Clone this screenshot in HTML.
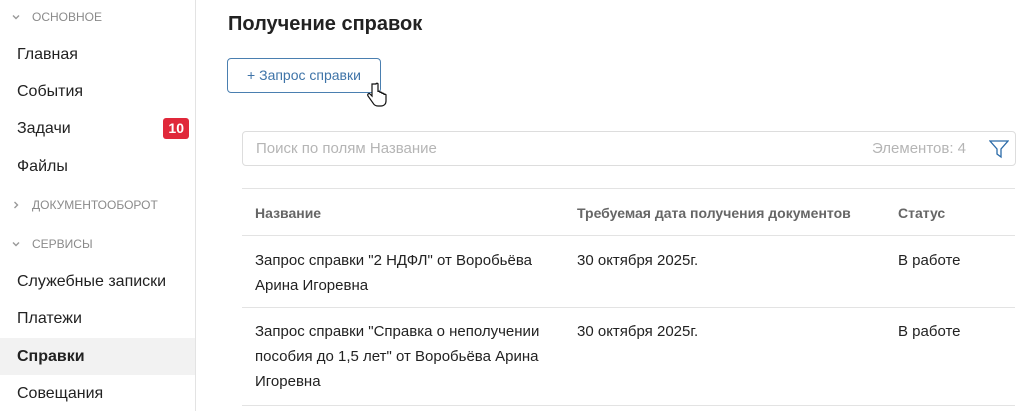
<!DOCTYPE html>
<html><head><meta charset="utf-8"><style>
*{margin:0;padding:0;box-sizing:border-box}
body{width:1027px;height:411px;overflow:hidden;background:#fff;font-family:"Liberation Sans",sans-serif;color:#222;position:relative}
.sb{position:absolute;left:0;top:0;width:196px;height:411px;border-right:1px solid #e3e3e3}
.grp{position:absolute;left:11px;font-size:12px;color:#8a8a8a;display:flex;align-items:center}
.grp svg{margin-right:11px}
.it{position:absolute;left:0;width:195px;height:37px;padding-left:17px;font-size:16px;line-height:37px;color:#222}
.badge{position:absolute;right:6px;top:8px;background:#e0283a;color:#fff;font-size:14px;font-weight:bold;line-height:21px;height:21px;padding:0 5px;border-radius:3px}
.abs{position:absolute}
.tx{font-size:15px;line-height:25px;color:#222}
.hd{font-size:14px;font-weight:bold;color:#666}
.ln{position:absolute;left:242px;width:773px;height:1px;background:#e3e3e3}
</style></head><body>
<div class="sb">
<div class="grp" style="top:10px"><svg width="10" height="10" viewBox="0 0 10 10"><path d="M2 3.5l3 3 3-3" fill="none" stroke="#999" stroke-width="1.4"/></svg>ОСНОВНОЕ</div>
<div class="it" style="top:36px">Главная</div>
<div class="it" style="top:73px">События</div>
<div class="it" style="top:110px">Задачи<span class="badge">10</span></div>
<div class="it" style="top:148px">Файлы</div>
<div class="grp" style="top:198px"><svg width="10" height="10" viewBox="0 0 10 10"><path d="M3.5 2l3 3-3 3" fill="none" stroke="#999" stroke-width="1.4"/></svg>ДОКУМЕНТООБОРОТ</div>
<div class="grp" style="top:237px"><svg width="10" height="10" viewBox="0 0 10 10"><path d="M2 3.5l3 3 3-3" fill="none" stroke="#999" stroke-width="1.4"/></svg>СЕРВИСЫ</div>
<div class="it" style="top:263px">Служебные записки</div>
<div class="it" style="top:300px">Платежи</div>
<div class="it" style="top:338px;background:#f2f2f2;font-weight:bold">Справки</div>
<div class="it" style="top:375px">Совещания</div>
</div>
<div class="abs" style="left:228px;top:13px;font-size:20px;font-weight:bold;color:#222">Получение справок</div>
<div class="abs" style="left:227px;top:58px;width:154px;height:35px;border:1px solid #4a7fb0;border-radius:4px;color:#3f74a8;font-size:14px;line-height:33px;text-align:center">+ Запрос справки</div>
<svg class="abs" style="left:366px;top:82px" width="22" height="26" viewBox="0 0 22 26"><path d="M6 2v12l-2-2c-1-1-3 0-2 2l5 7c1 2 3 3 5 3h3c3 0 5-2 5-5v-6c0-1-2-1-2 0v-1c0-1-2-1-2 0v-1c0-1-2-1-2 0v-1c0-1-2-1-2 0V2c0-1-2-1-2 0z" fill="#fff" stroke="#111" stroke-width="1.2"/></svg>
<div class="abs" style="left:242px;top:131px;width:774px;height:35px;border:1px solid #ddd;border-radius:4px"></div>
<div class="abs" style="left:256px;top:140px;font-size:15px;color:#b5b5b5">Поиск по полям Название</div>
<div class="abs" style="left:872px;top:140px;font-size:15px;color:#b5b5b5">Элементов: 4</div>
<svg class="abs" style="left:989px;top:139px" width="20" height="20" viewBox="0 0 20 20"><path d="M1 2h18l-7 8v8l-4-3v-5z" fill="none" stroke="#2a6aa8" stroke-width="1.3"/></svg>
<div class="ln" style="top:188px"></div>
<div class="abs hd" style="left:255px;top:205px">Название</div>
<div class="abs hd" style="left:577px;top:205px">Требуемая дата получения документов</div>
<div class="abs hd" style="left:898px;top:205px">Статус</div>
<div class="ln" style="top:235px"></div>
<div class="abs tx" style="left:255px;top:248px;width:320px">Запрос справки "2 НДФЛ" от Воробьёва<br>Арина Игоревна</div>
<div class="abs tx" style="left:577px;top:248px">30 октября 2025г.</div>
<div class="abs tx" style="left:898px;top:248px">В работе</div>
<div class="ln" style="top:307px"></div>
<div class="abs tx" style="left:255px;top:319px;width:320px">Запрос справки "Справка о неполучении<br>пособия до 1,5 лет" от Воробьёва Арина<br>Игоревна</div>
<div class="abs tx" style="left:577px;top:319px">30 октября 2025г.</div>
<div class="abs tx" style="left:898px;top:319px">В работе</div>
<div class="ln" style="top:405px"></div>
</body></html>
